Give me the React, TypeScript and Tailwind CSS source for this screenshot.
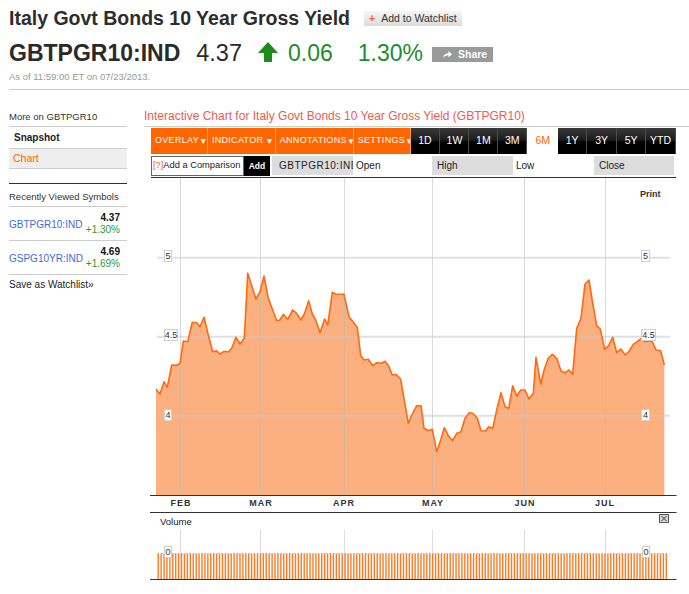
import React from "react";

const pts: [number, number][] = [
  [156, 389.3], [160, 394], [164, 381.7], [167.3, 387.3], [171.7, 365], [176.7, 365.3], [180, 363.3],
  [183.3, 341], [187.7, 341.7], [192.3, 322.3], [196.7, 322.7], [200, 326.7], [204, 317.3], [208.3, 335],
  [212.7, 351.7], [216.7, 350.7], [220, 354], [224, 351.3], [228.3, 352], [231.7, 348.3], [236, 337.3],
  [240, 344], [244.3, 338.3], [247.7, 273.3], [256, 299], [260, 291.7], [264, 276], [268.3, 298.3],
  [276.7, 320.7], [280, 320], [283.3, 314.3], [287.7, 319.3], [292.7, 310], [296.7, 313.3], [300.7, 320],
  [304.3, 314.3], [308.7, 300.7], [312.3, 314], [315.7, 320], [320, 332.7], [324.7, 319], [327.7, 325],
  [332.3, 292.3], [335.7, 294], [344, 294.3], [349, 316.7], [353.3, 322.3], [357.3, 327.3], [360.7, 355.7],
  [364.3, 360], [368.3, 359.3], [372.7, 365.7], [376.7, 362.7], [381.7, 363.3], [385, 361.3], [388.7, 366],
  [392.3, 375], [396, 374.3], [400.7, 379.3], [408.3, 423.3], [412.3, 414], [416.7, 405.7], [421, 405.7],
  [424, 428.3], [428.3, 430.7], [432.3, 429.3], [436.7, 451.7], [440.7, 440], [444.3, 427.7], [448.3, 435.7],
  [452.7, 440.7], [456.7, 433.3], [461, 431.7], [465, 418.3], [469.3, 412.7], [472.7, 413.3], [477.3, 418.3],
  [481, 430.7], [485.3, 431], [488.7, 426.7], [492.7, 428.3], [496.7, 410], [501, 392.7], [505, 406.7],
  [508.7, 408.3], [512.7, 385.7], [516.7, 396], [520.7, 390], [525, 390], [529, 399], [533.3, 393.3],
  [536, 357.3], [540.7, 384], [544.3, 369.3], [548.3, 358.3], [552.3, 354.3], [556.7, 358.3], [561, 371],
  [565.3, 372.7], [569, 370], [572.7, 374.3], [576.7, 328.3], [581, 318.3], [585, 284], [589, 280],
  [592.7, 303.3], [596.7, 325.7], [600.3, 329], [604.7, 349.3], [608.7, 345.7], [612.7, 337.3], [616.7, 352.7],
  [620.7, 349], [625.3, 355], [629.3, 351], [633.3, 344.3], [637.3, 341.7], [640.7, 339], [645, 341.7],
  [649, 341], [652.3, 341.7], [656, 350], [660.7, 350.7], [664.3, 365],
];

const vGrid = [180.5, 260.5, 344.5, 432.5, 524.5, 605.5];
const months: [string, number][] = [
  ["FEB", 181], ["MAR", 261], ["APR", 344], ["MAY", 433], ["JUN", 525], ["JUL", 605],
];

const FONT = "'Liberation Sans', Arial, sans-serif";

function LabelBox({ x, y, w, text }: { x: number; y: number; w: number; text: string }) {
  return (
    <g>
      <rect x={x + 0.5} y={y + 0.5} width={w} height={11} fill="#fff" stroke="#cfcfcf" />
      <text x={x + 0.5 + w / 2} y={y + 9} fontSize={9} fill="#333" textAnchor="middle" fontFamily={FONT}>
        {text}
      </text>
    </g>
  );
}

function Chart() {
  const line = pts.map(([x, y], i) => `${i ? "L" : "M"}${x},${y}`).join(" ");
  const area = `M156,495 L${pts.map((p) => p.join(",")).join(" L")} L664.3,495 Z`;
  const bars = Array.from({ length: 175 }, (_, i) => 157.5 + i * 2.92);
  return (
    <svg width={539} height={403} viewBox="150 178 539 403" className="block">
      <path d={area} fill="#fdb07f" />
      {vGrid.map((x) => (
        <line key={x} x1={x} y1={178} x2={x} y2={495} stroke="#b5b5b5" strokeOpacity={0.5} strokeWidth={1} />
      ))}
      {[257.7, 336.7, 415.7].map((y) => (
        <line key={y} x1={157} y1={y} x2={670} y2={y} stroke="#c8c8c8" strokeOpacity={0.55} strokeWidth={2} />
      ))}
      <path d={line} fill="none" stroke="#ff6a10" strokeWidth={1.6} strokeLinejoin="round" />

      <LabelBox x={164} y={250} w={7} text="5" />
      <LabelBox x={641} y={250} w={8} text="5" />
      <LabelBox x={164} y={329} w={13} text="4.5" />
      <LabelBox x={641} y={329} w={14} text="4.5" />
      <LabelBox x={164} y={409} w={7} text="4" />
      <LabelBox x={641} y={409} w={8} text="4" />

      <text x={640} y={197} fontSize={9} fontWeight={700} fill="#333" fontFamily={FONT}>
        Print
      </text>

      <line x1={150} y1={495.5} x2={676.5} y2={495.5} stroke="#333" />
      {months.map(([m, x]) => (
        <text key={m} x={x} y={505.5} fontSize={9} fontWeight={700} fill="#333" textAnchor="middle" letterSpacing={1} fontFamily={FONT}>
          {m}
        </text>
      ))}
      <line x1={150} y1={512.5} x2={676.5} y2={512.5} stroke="#333" />

      <text x={160} y={525} fontSize={9.5} fill="#222" fontFamily={FONT}>
        Volume
      </text>
      <g>
        <rect x={659.5} y={514.5} width={9} height={8} fill="#d8d8d8" stroke="#555" />
        <line x1={661.5} y1={516} x2={666.5} y2={521} stroke="#333" />
        <line x1={666.5} y1={516} x2={661.5} y2={521} stroke="#333" />
      </g>
      {vGrid.map((x) => (
        <line key={"v" + x} x1={x} y1={530} x2={x} y2={579} stroke="#dcdcdc" strokeWidth={1} />
      ))}
      <line x1={157} y1={553.5} x2={670} y2={553.5} stroke="#d0d0d0" strokeDasharray="2 2" />
      {bars.map((x, i) => (
        <rect key={i} x={x} y={553.5} width={1.4} height={25.5} fill="#ff7a24" />
      ))}
      <LabelBox x={164} y={546} w={7} text="0" />
      <LabelBox x={642} y={546} w={7} text="0" />
      <line x1={150} y1={579.5} x2={676.5} y2={579.5} stroke="#333" />
    </svg>
  );
}

const orangeBtns: [string, string, string][] = [
  ["OVERLAY", "w-[57px]", ""],
  ["INDICATOR", "w-[68px]", "ml-[2px]"],
  ["ANNOTATIONS", "w-[78px]", ""],
  ["SETTINGS", "w-[57px]", ""],
];

const rangeBtns: [string, string][] = [
  ["1D", "w-[30px]"],
  ["1W", "w-[29px]"],
  ["1M", "w-[29px]"],
  ["3M", "w-[29px]"],
  ["6M", "w-[31px]"],
  ["1Y", "w-[29px]"],
  ["3Y", "w-[30px]"],
  ["5Y", "w-[29px]"],
  ["YTD", "w-[30px]"],
];

export default function App() {
  return (
    <div className="w-[689px] h-[594px] bg-white overflow-hidden font-['Liberation_Sans',Arial,sans-serif] text-[#333]">
      {/* header */}
      <div className="px-[9px] pt-[8px]">
        <div className="flex items-center h-[20px]">
          <h1 className="text-[19.5px] leading-[20px] font-bold text-[#2d2d2d] whitespace-nowrap">
            Italy Govt Bonds 10 Year Gross Yield
          </h1>
          <div className="ml-[14px] h-[15px] w-[98px] flex items-center bg-[linear-gradient(#f5f5f5,#dcdcdc)] text-[10.5px] leading-[15px] text-[#333]">
            <span className="ml-[5px] mr-[6px] text-[#ff6600] font-bold">+</span>
            <span>Add to Watchlist</span>
          </div>
        </div>
        <div className="flex h-[24px] mt-[13px] items-center whitespace-nowrap">
          <span className="text-[23px] leading-[24px] font-bold text-[#2a2a2a]">GBTPGR10:IND</span>
          <span className="ml-[16px] text-[23.5px] leading-[24px] text-[#2a2a2a]">4.37</span>
          <svg width="20" height="20" viewBox="0 0 20 20" className="ml-[16px] self-start mt-[1px]">
            <polygon points="10,0 20,11 14,11 14,20 6,20 6,11 0,11" fill="#1d8a1d" />
          </svg>
          <span className="ml-[10px] text-[23px] leading-[24px] text-[#1e8c22]">0.06</span>
          <span className="ml-[25px] text-[23px] leading-[24px] text-[#1e8c2e]">1.30%</span>
          <div className="ml-[9px] self-start mt-[6px] h-[15px] w-[61px] bg-[#9a9a9a] flex items-center">
            <svg width="9" height="7" viewBox="0 0 9 7" className="ml-[11px]">
              <path d="M0 7 C0.5 3.8 2.5 2.3 5.5 2.3 V0 L9 3.3 L5.5 6.5 V4.3 C3.2 4.3 1.4 5.2 0 7Z" fill="#fff" />
            </svg>
            <span className="ml-[6px] text-[10.5px] font-bold text-white leading-[15px]">Share</span>
          </div>
        </div>
        <div className="mt-[6px] h-[11px] text-[9.5px] leading-[11px] text-[#999]">
          As of 11:59:00 ET on 07/23/2013.
        </div>
      </div>
      <div className="ml-[9px] mt-[7px] h-px bg-[#cccccc]" />

      {/* body */}
      <div className="flex">
        {/* sidebar */}
        <div className="ml-[9px] w-[118px] pt-[19px] text-[10px]">
          <div className="h-[18px] flex items-center border-b border-[#cccccc] text-[9.5px] text-[#333]">
            More on GBTPGR10
          </div>
          <div className="h-[22px] flex items-center border-b border-[#cccccc] pl-[5px] font-bold text-[#222]">
            Snapshot
          </div>
          <div className="h-[20px] flex items-center border-b border-[#cccccc] bg-[#eeeeee] pl-[4px] text-[10.5px] text-[#ff6600]">
            Chart
          </div>
          <div className="h-[14px]" />
          <div className="h-[24px] border-t border-b border-t-[#333] border-b-[#cccccc] pt-[7px] text-[9.5px] leading-[11px] text-[#333]">
            Recently Viewed Symbols
          </div>
          {[
            ["GBTPGR10:IND", "4.37", "+1.30%"],
            ["GSPG10YR:IND", "4.69", "+1.69%"],
          ].map(([sym, px, ch]) => (
            <div key={sym} className="h-[34px] flex items-center justify-between border-b border-[#cccccc]">
              <span className="text-[#3d6be0] mt-[1px]">{sym}</span>
              <div className="flex flex-col items-end mr-[7px] leading-[12px]">
                <span className="font-bold text-[#111]">{px}</span>
                <span className="text-[#2a9a3a]">{ch}</span>
              </div>
            </div>
          ))}
          <div className="h-[19px] flex items-center text-[#222]">Save as Watchlist»</div>
        </div>

        {/* main */}
        <div className="ml-[17px] flex-1">
          <div className="h-[37px] border-b border-[#cccccc] pt-[19px] text-[12px] leading-[14px] text-[#f25a50] whitespace-nowrap">
            Interactive Chart for Italy Govt Bonds 10 Year Gross Yield (GBTPGR10)
          </div>
          {/* toolbar */}
          <div className="ml-[7px] mt-[1px] flex h-[26px] w-[525px]">
            {orangeBtns.map(([t, w, gap]) => (
              <div
                key={t}
                className={`${w} h-full bg-[#ff6600] border-r border-[#ff9c5a] flex items-center pl-[4px] overflow-hidden whitespace-nowrap text-white text-[9px] tracking-[0.3px]`}
              >
                <span className="shrink-0">{t}</span>
                <span className={`shrink-0 text-[8.5px] ${gap}`}>▼</span>
              </div>
            ))}
            {rangeBtns.map(([t, w]) =>
              t === "6M" ? (
                <div key={t} className={`${w} h-full bg-white flex items-center justify-center text-[10.5px] text-[#ff6600]`}>
                  {t}
                </div>
              ) : (
                <div
                  key={t}
                  className={`${w} h-full bg-[linear-gradient(#3a3a3a,#1c1c1c_45%,#000_55%,#000)] border-r border-[#4a4a4a] flex items-center justify-center text-[10.5px] text-white`}
                >
                  {t}
                </div>
              )
            )}
          </div>
          {/* comparison row */}
          <div className="ml-[7px] mt-[1px] w-[525px] h-[23px] border-b border-[#333] flex text-[10px] text-[#222] whitespace-nowrap">
            <div className="mt-[1px] h-[20px] w-[93px] border border-[#666] flex items-center pl-[1px] overflow-hidden text-[9.3px]">
              <span className="text-[#ff6600]">[?]</span>
              <span>Add a Comparison</span>
            </div>
            <div className="mt-[1px] h-[20px] w-[26px] bg-black flex items-center justify-center text-white font-bold text-[8.5px]">
              Add
            </div>
            <div className="ml-[2px] mt-[1px] h-[19px] w-[81px] bg-[#dddddd] flex items-center pl-[7px] overflow-hidden tracking-[0.5px]">
              GBTPGR10:IND
            </div>
            <div className="h-[21px] w-[79px] flex items-center pl-[3px]">Open</div>
            <div className="mt-[1px] h-[19px] w-[81px] bg-[#dddddd] flex items-center pl-[5px]">High</div>
            <div className="h-[21px] w-[81px] flex items-center pl-[3px]">Low</div>
            <div className="mt-[1px] h-[19px] w-[80px] bg-[#dddddd] flex items-center pl-[5px]">Close</div>
          </div>
          <div className="ml-[6px]">
            <Chart />
          </div>
        </div>
      </div>
    </div>
  );
}
